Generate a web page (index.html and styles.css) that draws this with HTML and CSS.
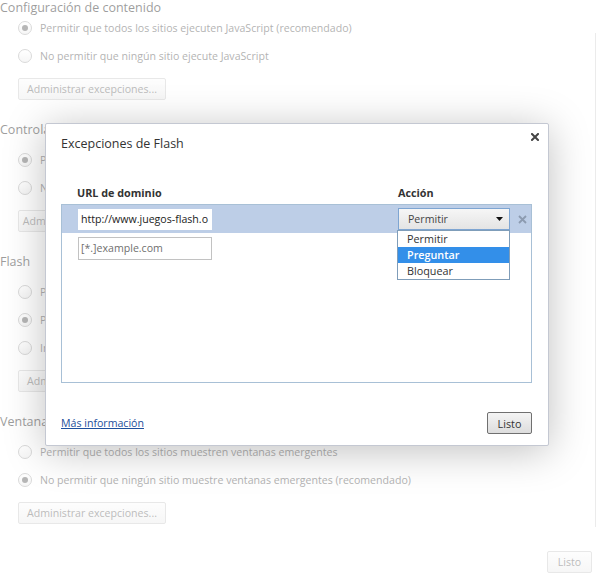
FILE: index.html
```html
<!DOCTYPE html>
<html lang="es">
<head>
<meta charset="utf-8">
<title>Excepciones de Flash</title>
<link rel="stylesheet" href="styles.css">
</head>
<body>
<div class="page">
  <div class="top">
    <div class="sections">
      <section class="sec first">
        <h3>Configuración de contenido</h3>
        <div class="radio checked"><span class="dot"></span>Permitir que todos los sitios ejecuten JavaScript (recomendado)</div>
        <div class="radio"><span class="dot"></span>No permitir que ningún sitio ejecute JavaScript</div>
        <button class="bgbtn">Administrar excepciones...</button>
      </section>
      <section class="sec">
        <h3>Controladores</h3>
        <div class="radio checked"><span class="dot"></span>Permitir que los sitios soliciten convertirse en controladores de protocolos (recomendado)</div>
        <div class="radio"><span class="dot"></span>No permitir que ningún sitio controle protocolos</div>
        <button class="bgbtn">Administrar controladores...</button>
      </section>
      <section class="sec">
        <h3>Flash</h3>
        <div class="radio"><span class="dot"></span>Permitir que los sitios ejecuten Flash</div>
        <div class="radio checked"><span class="dot"></span>Preguntar primero antes de permitir que los sitios ejecuten Flash (recomendado)</div>
        <div class="radio"><span class="dot"></span>Impedir que los sitios ejecuten Flash</div>
        <button class="bgbtn">Administrar excepciones...</button>
      </section>
      <section class="sec last">
        <h3>Ventanas emergentes</h3>
        <div class="radio"><span class="dot"></span>Permitir que todos los sitios muestren ventanas emergentes</div>
        <div class="radio checked"><span class="dot"></span>No permitir que ningún sitio muestre ventanas emergentes (recomendado)</div>
        <button class="bgbtn">Administrar excepciones...</button>
      </section>
    </div>
    <div class="edge"></div>
  </div>
  <div class="footer"><button class="bgbtn done">Listo</button></div>
</div>

<div class="veil"></div>

<div class="dialog">
  <h2 class="title">Excepciones de Flash</h2>
  <button class="close" aria-label="Cerrar">
    <svg width="8" height="8" viewBox="0 0 8 8"><path d="M1 1L7 7M7 1L1 7" stroke="#444" stroke-width="2" stroke-linecap="square"/></svg>
  </button>
  <div class="heads">
    <div class="c1">URL de dominio</div>
    <div>Acción</div>
  </div>
  <div class="list">
    <div class="row sel">
      <div class="cell1"><div class="input">http://www.juegos-flash.o</div></div>
      <div class="select">
        <span>Permitir</span>
        <svg class="arrow" width="7" height="4" viewBox="0 0 7 4"><path d="M0 0H7L3.5 4Z" fill="#111"/></svg>
        <div class="menu">
          <div class="item">Permitir</div>
          <div class="item hl">Preguntar</div>
          <div class="item">Bloquear</div>
        </div>
      </div>
      <svg class="del" width="9" height="9" viewBox="0 0 9 9"><path d="M1 1L8 8M8 1L1 8" stroke="#8c9bb0" stroke-width="1.8"/></svg>
    </div>
    <div class="row row2">
      <div class="cell1"><div class="input ph">[*.]example.com</div></div>
    </div>
  </div>
  <div class="dfoot">
    <a class="more" href="#">Más información</a>
    <button class="okbtn">Listo</button>
  </div>
</div>
</body>
</html>
```

FILE: styles.css
```css
html, body {
  margin: 0;
  padding: 0;
}

body {
  width: 600px;
  height: 574px;
  overflow: hidden;
  position: relative;
  background: #fff;
  font-family: "Open Sans", "Noto Sans", sans-serif;
}

.page {
  display: flex;
  flex-direction: column;
  height: 574px;
}

.top {
  display: flex;
}

.sections {
  width: 595px;
  overflow: hidden;
}

.edge {
  width: 1px;
  height: 494px;
  margin-top: 33px;
  background: #d6d6d6;
}

.sec {
  margin-bottom: 20px;
}

.sec.last {
  margin-bottom: 0;
}

.sec h3 {
  margin: 0 0 6px 0;
  font-size: 12.5px;
  font-weight: normal;
  line-height: 20px;
  color: #3a3a3a;
  white-space: nowrap;
}

.sec.first h3 {
  margin-top: 0;
  margin-bottom: -2px;
  line-height: 16px;
}

.radio {
  display: flex;
  align-items: center;
  height: 28px;
  padding-left: 18px;
  font-size: 10.6px;
  color: #666;
  white-space: nowrap;
}

.dot {
  flex: none;
  width: 14px;
  height: 14px;
  box-sizing: border-box;
  border: 1px solid #b4b4b4;
  border-radius: 50%;
  background: linear-gradient(#ffffff, #ececec);
  margin-right: 8px;
  display: flex;
  align-items: center;
  justify-content: center;
}

.radio.checked .dot::after {
  content: "";
  width: 6px;
  height: 6px;
  border-radius: 50%;
  background: #6c6c6c;
}

.bgbtn {
  display: block;
  margin: 8px 0 0 18px;
  width: 148px;
  height: 22px;
  padding: 0;
  border: 1px solid #d0d0d0;
  border-radius: 2px;
  background: linear-gradient(#fbfbfb, #ededed);
  font-family: "Open Sans", "Noto Sans", sans-serif;
  font-size: 10.6px;
  color: #777;
  white-space: nowrap;
}

.footer {
  display: flex;
  justify-content: flex-end;
  padding-right: 8px;
  margin-top: 24px;
}

.bgbtn.done {
  margin: 0;
  width: 45px;
}

.veil {
  position: absolute;
  inset: 0;
  background: rgba(255, 255, 255, 0.5);
}

.dialog {
  position: absolute;
  left: 45px;
  top: 123px;
  width: 504px;
  box-sizing: border-box;
  padding: 10px 16px 11px 15px;
  background: #fff;
  border: 1px solid #c4c8d2;
  border-radius: 2px;
  box-shadow: 0 5px 40px rgba(0, 0, 0, 0.25);
  color: #333;
}

.title {
  margin: 0;
  font-size: 12.5px;
  font-weight: normal;
  line-height: 20px;
  color: #333;
}

.close {
  position: absolute;
  top: 9px;
  right: 9px;
  width: 8px;
  height: 8px;
  padding: 0;
  border: 0;
  background: none;
  display: flex;
}

.heads {
  display: flex;
  margin-top: 31px;
  margin-bottom: 3px;
  padding-left: 16px;
  height: 16px;
  line-height: 16px;
  font-size: 10.8px;
  font-weight: bold;
  color: #333;
}

.heads .c1 {
  width: 321px;
}

.list {
  height: 179px;
  box-sizing: border-box;
  border: 1px solid #a8c0d6;
}

.row {
  display: flex;
  align-items: center;
  height: 28px;
  padding-left: 16px;
}

.row.sel {
  background: #bdcee7;
}

.row2 {
  align-items: flex-start;
  padding-top: 4px;
}

.cell1 {
  width: 320px;
  flex: none;
}

.input {
  width: 134px;
  height: 21px;
  box-sizing: border-box;
  padding-left: 3px;
  background: #fff;
  font-size: 10.6px;
  line-height: 21px;
  color: #222;
  white-space: nowrap;
  overflow: hidden;
}

.input.ph {
  height: 23px;
  line-height: 21px;
  border: 1px solid #c2c2c2;
  padding-left: 2px;
  color: #6f6f6f;
}

.select {
  position: relative;
  flex: none;
  width: 112px;
  height: 22px;
  box-sizing: border-box;
  display: flex;
  align-items: center;
  padding: 0 6px 0 9px;
  border: 1px solid #7ea5d2;
  background: linear-gradient(#f6f6f6, #e4e4e4);
  font-size: 10.6px;
  color: #444;
}

.arrow {
  margin-left: auto;
}

.menu {
  position: absolute;
  top: 21px;
  left: -2px;
  width: 113px;
  box-sizing: border-box;
  border: 1px solid #7f9db9;
  background: #fff;
}

.item {
  height: 16px;
  line-height: 16px;
  padding-left: 9px;
  font-size: 10.8px;
  color: #333;
}

.item.hl {
  background: #338fe9;
  color: #fff;
  font-weight: 600;
}

.del {
  margin-left: 8px;
}

.dfoot {
  display: flex;
  justify-content: space-between;
  align-items: center;
  margin-top: 29px;
  height: 22px;
}

.more {
  font-size: 10.6px;
  color: #1d4f9c;
  text-decoration: underline;
}

.okbtn {
  width: 45px;
  height: 22px;
  padding: 0;
  border: 1px solid #707070;
  border-radius: 2px;
  background: linear-gradient(#f4f4f4, #dddddd);
  font-family: "Open Sans", "Noto Sans", sans-serif;
  font-size: 10.8px;
  color: #333;
}
```
